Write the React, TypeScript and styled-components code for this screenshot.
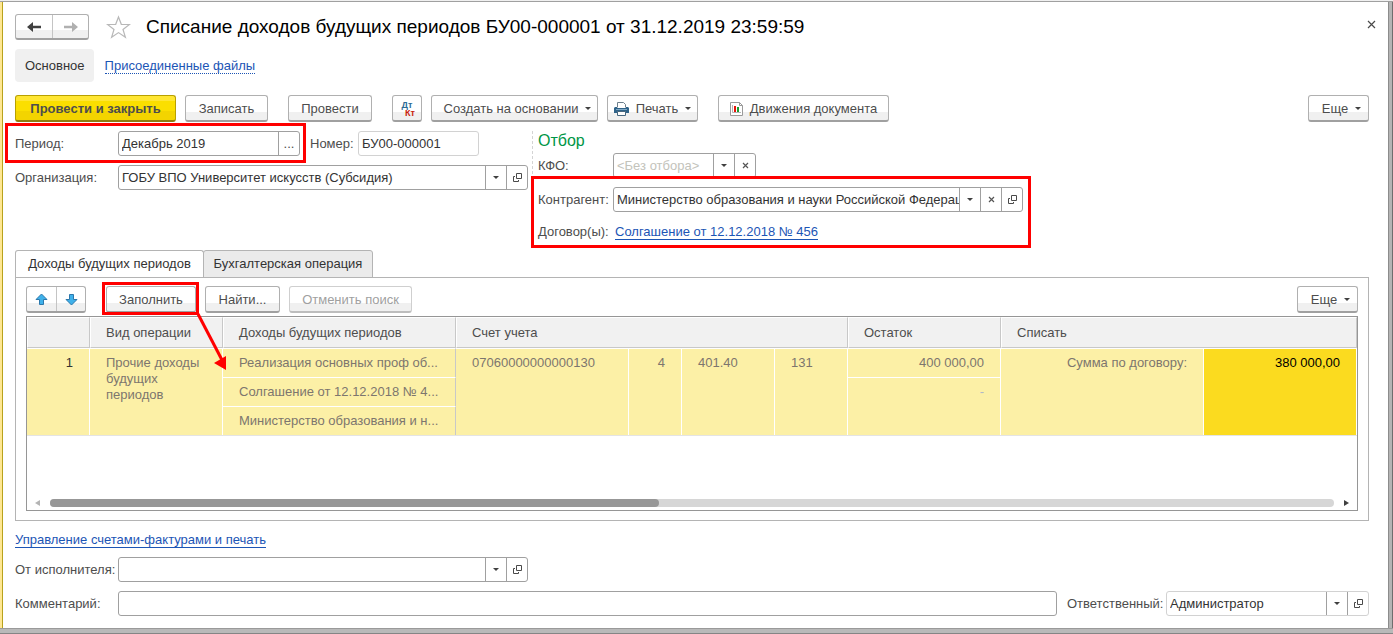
import React, { useState } from 'react';
import styled, { createGlobalStyle, css } from 'styled-components';

const GlobalStyle = createGlobalStyle`
  *, *::before, *::after { box-sizing: border-box; }
  body {
    margin: 0;
    background: #fff;
    color: #4d4d4d;
    font: 13px/16px "Liberation Sans", Arial, sans-serif;
  }
  button, input { font: inherit; color: inherit; margin: 0; }
`;

const line = '#a0a0a0';
const red = '#ff0000';

const Frame = styled.div`
  min-height: 100vh;
  display: grid;
  grid-template: 2px 1fr 6px / 3px 1fr 5px;
`;

const TopEdge = styled.div`
  grid-column: 1 / -1;
  background: #f0f0f0;
  border-bottom: 1px solid #a0a0a0;
`;

const LeftEdge = styled.div`
  background: #ffe793;
  border-right: 1px solid #b8a21c;
`;

const RightEdge = styled.div`
  background: #b4b4b4;
  border-left: 1px solid #8c8c8c;
  border-right: 1px solid #6e6e6e;
`;

const BottomEdge = styled.div`
  grid-column: 1 / -1;
  background: #b9b9b9;
  border-top: 1px solid #9a9a9a;
  border-bottom: 1px solid #858585;
`;

const Page = styled.main`
  display: flex;
  flex-direction: column;
  min-width: 0;
  padding: 12px 19px 12px 12px;
`;

const Header = styled.header`
  display: flex;
  align-items: center;
  height: 26px;
`;

const Title = styled.h1`
  flex: 1;
  margin: 0 0 0 15px;
  color: #000;
  font-size: 19px;
  line-height: 28px;
  font-weight: 400;
  white-space: nowrap;
`;

const IconButton = styled.button`
  display: flex;
  align-items: center;
  justify-content: center;
  padding: 0;
  border: 0;
  background: none;
`;

const StarButton = styled(IconButton)`
  margin-left: 17px;
`;

const CloseButton = styled(IconButton)`
  align-self: flex-start;
  width: 20px;
  height: 20px;
  margin-right: -12px;
`;

const raised = css`
  border: 1px solid #b0b0b0;
  border-bottom: 2px solid #a0a0a0;
  border-radius: 3px;
  background: linear-gradient(#fff 0 66%, #f0f0f0 66%);
`;

const ButtonPair = styled.div<{ $height: number; $half: number }>`
  display: flex;
  height: ${(p) => p.$height}px;
  ${raised}

  button {
    width: ${(p) => p.$half}px;
  }
  button + button {
    border-left: 1px solid #c4c4c4;
  }
`;

const Sections = styled.nav`
  display: flex;
  align-items: center;
  gap: 11px;
  height: 33px;
  margin-top: 9px;
`;

const SectionCurrent = styled.a`
  padding: 1px 9px 0 10px;
  border-radius: 4px;
  background: #f0f0f0;
  color: #333;
  line-height: 32px;
  text-decoration: none;
`;

const Link = styled.a<{ $dotted?: boolean }>`
  padding-top: 2px;
  color: #1c55b5;
  text-decoration: none;
  border-bottom: 1px ${(p) => (p.$dotted ? 'dotted' : 'solid')} #1c55b5;
  line-height: 14px;
`;

const Toolbar = styled.div`
  display: flex;
  align-items: center;
  height: 27px;
`;

const MainToolbar = styled(Toolbar)`
  margin-top: 13px;
`;

const Button = styled.button<{ $width: number; $gap?: number; $primary?: boolean; $menu?: boolean }>`
  display: flex;
  align-items: center;
  justify-content: center;
  gap: 7px;
  flex: none;
  width: ${(p) => p.$width}px;
  height: 27px;
  margin-left: ${(p) => p.$gap ?? 0}px;
  padding: 1px 0 0 ${(p) => (p.$menu ? 6 : 0)}px;
  white-space: nowrap;
  ${raised}

  ${(p) =>
    p.$primary &&
    css`
      border-color: #b8a000;
      border-bottom-color: #8f7d10;
      background: linear-gradient(#ffe633 0 20%, #fbdf00 20% 62%, #f3d400 62%);
      font-weight: 700;
    `}

  &:disabled {
    color: #a0a0a0;
    border-color: #cfcfcf;
    border-bottom-color: #bdbdbd;
  }
`;

const Spacer = styled.div`
  flex: 1;
`;

const Posting = styled.span`
  display: flex;
  flex-direction: column;
  width: 16px;
  font-size: 9px;
  line-height: 8px;
  font-weight: 700;
  color: #2d6a94;

  span + span {
    align-self: flex-end;
    color: #c8200c;
  }
`;

const FormArea = styled.div`
  display: flex;
  margin-top: 9px;
`;

const FormColumn = styled.div`
  display: flex;
  flex-direction: column;
  gap: 9px;
  width: 517px;
`;

const FilterColumn = styled.section`
  padding-left: 5px;
  border-left: 1px dashed #d4d4d4;
`;

const FilterTitle = styled.h2`
  margin: 0;
  color: #009646;
  font-size: 16px;
  line-height: 20px;
  font-weight: 400;
`;

const Row = styled.div`
  display: flex;
  align-items: center;
  height: 25px;
`;

const FilterRow = styled(Row)`
  margin-top: 2px;
`;

const Label = styled.label<{ $width: number }>`
  flex: none;
  width: ${(p) => p.$width}px;
  white-space: nowrap;
`;

const outline = css`
  &::after {
    content: '';
    position: absolute;
    border: 3px solid ${red};
    pointer-events: none;
  }
`;

const PeriodMark = styled(Row)`
  position: relative;
  ${outline}
  &::after { inset: -8px -6px -7px -10px; }
`;

const FilterMark = styled.div`
  position: relative;
  display: flex;
  flex-direction: column;
  gap: 7px;
  width: 485px;
  margin-top: 9px;
  ${outline}
  &::after { inset: -11px -8px -4px -7px; }
`;

const FillMark = styled.div`
  position: relative;
  margin-left: 20px;
  ${outline}
  &::after { inset: -4px -3px -2px -4px; }
`;

const Arrow = styled.svg`
  position: absolute;
  z-index: 1;
  left: 88px;
  top: 26px;
`;

const FieldBox = styled.div<{ $width?: number; $soft?: boolean }>`
  display: flex;
  flex: ${(p) => (p.$width ? 'none' : '1')};
  width: ${(p) => (p.$width ? `${p.$width}px` : 'auto')};
  min-width: 0;
  height: 25px;
  border: 1px solid ${(p) => (p.$soft ? '#d2d2d2' : line)};
  border-radius: 3px;
  background: #fff;

  input {
    flex: 1;
    min-width: 0;
    padding: 0 0 0 3px;
    border: 0;
    outline: 0;
    background: none;
    color: #333;
  }
  input::placeholder { color: #c3c3bb; opacity: 1; }

  button {
    width: 21px;
    border-left: 1px solid ${line};
  }
`;

const TabList = styled.div`
  display: flex;
  height: 28px;
  margin: 6px 0 -1px;
`;

const Tab = styled.button<{ $active: boolean; $width: number }>`
  width: ${(p) => p.$width}px;
  padding: 0;
  border: 1px solid #b4b4b4;
  border-bottom-color: ${(p) => (p.$active ? '#fff' : '#b4b4b4')};
  border-radius: 3px 3px 0 0;
  background: ${(p) => (p.$active ? '#fff' : '#ebebeb')};
  color: #333;

  & + & { margin-left: -1px; }
`;

const TabPanel = styled.div`
  padding: 8px 10px 9px;
  border: 1px solid #b4b4b4;
`;

const TableBox = styled.div`
  display: flex;
  flex-direction: column;
  justify-content: space-between;
  height: 195px;
  margin-top: 3px;
  border: 1px solid #969696;
`;

const Table = styled.table`
  width: 100%;
  table-layout: fixed;
  border-collapse: separate;
  border-spacing: 0;
  border-bottom: 1px solid #e4e4e4;
`;

const HeadCell = styled.th`
  height: 31px;
  padding: 0 15px;
  border: 1px solid #fff;
  border-right-color: #c8c8c8;
  border-bottom-color: #c8c8c8;
  background: #f1f1f1;
  background-clip: padding-box;
  font-weight: 400;
  text-align: left;
`;

const Cell = styled.td<{ $right?: boolean; $rule?: boolean; $current?: boolean; $empty?: boolean }>`
  height: 29px;
  padding: 6px 16px;
  border-right: 1px solid ${(p) => (p.$rule ? '#c8c8c8' : '#fff')};
  border-top: 1px solid #fff;
  background: ${(p) => (p.$current ? '#fbdb1f' : '#fcf0a6')};
  background-clip: padding-box;
  color: ${(p) => (p.$current ? '#000' : p.$empty ? '#b0b8c8' : '#7d766e')};
  text-align: ${(p) => (p.$right ? 'right' : 'left')};
  vertical-align: top;
  overflow: hidden;
  white-space: nowrap;
`;

const NumberCell = styled(Cell)`
  color: #333;
`;

const WrapCell = styled(Cell)`
  white-space: normal;
`;

const ScrollBar = styled.div`
  display: flex;
  align-items: center;
  gap: 10px;
  padding: 0 8px 2px;
  height: 12px;
`;

const Track = styled.div`
  flex: 1;
  height: 8px;
  border-radius: 4px;
  background: #d6d6d6;
`;

const Thumb = styled.div`
  width: 47.4%;
  height: 8px;
  border-radius: 4px;
  background: #979797;
`;

const Footer = styled.footer`
  display: flex;
  flex-direction: column;
  gap: 9px;
  margin-top: 11px;
`;

const InvoiceLine = styled.div`
  height: 16px;
`;

const Owner = styled(Row)`
  margin-left: 10px;
`;

const CaretIcon = () => (
  <svg width="6" height="3" viewBox="0 0 6 3" aria-hidden="true">
    <path d="M0 0h6L3 3z" fill="#404040" />
  </svg>
);

const ClearIcon = () => (
  <svg width="7" height="7" viewBox="0 0 7 7" aria-hidden="true">
    <path d="M1 1l5 5M6 1L1 6" stroke="#555" strokeWidth="1.200" />
  </svg>
);

const OpenIcon = () => (
  <svg width="9" height="9" viewBox="0 0 9 9" fill="none" stroke="#4a4a4a" aria-hidden="true">
    <path d="M3.500 .5h5v5h-5zM2 3.500H.5v5h5V7" />
  </svg>
);

const BackIcon = ({ color }: { color: string }) => (
  <svg width="14" height="12" viewBox="0 0 14 12" aria-hidden="true">
    <path d="M0 6l6-5v3.700h8v2.600H6V11z" fill={color} />
  </svg>
);

const ForwardIcon = ({ color }: { color: string }) => (
  <svg width="14" height="12" viewBox="0 0 14 12" aria-hidden="true">
    <path d="M14 6L8 1v3.700H0v2.600h8V11z" fill={color} />
  </svg>
);

const StarIcon = () => (
  <svg width="25" height="24" viewBox="0 0 25 24" aria-hidden="true">
    <path
      d="M12.500 2l2.800 7.300 8.200.2-6.500 4.900 2.400 7.800-6.900-4.600-6.900 4.600L8 14.400 1.500 9.500l8.200-.2z"
      fill="#fff"
      stroke="#b8b8b8"
      strokeWidth="1.200"
    />
  </svg>
);

const CloseIcon = () => (
  <svg width="9" height="9" viewBox="0 0 9 9" aria-hidden="true">
    <path d="M1 1l7 7M8 1L1 8" stroke="#4a4a4a" strokeWidth="1.200" />
  </svg>
);

const MoveIcon = ({ down }: { down?: boolean }) => (
  <svg width="13" height="13" viewBox="0 0 13 13" aria-hidden="true">
    <path
      d={down ? 'M6.500 12L1 6.500h3.500v-5h4v5H12z' : 'M6.500 1L12 6.500H8.500v5h-4v-5H1z'}
      fill="#3fb1ea"
      stroke="#2c78ac"
    />
  </svg>
);

const PrinterIcon = () => (
  <svg width="15" height="14" viewBox="0 0 15 14" aria-hidden="true">
    <path d="M3.500 5.500v-5h6l2 2v3" fill="#fff" stroke="#6d7f8c" />
    <path d="M1 5h2v1h9V5h2l1 1v5H0V6z" fill="#2f6389" />
    <path d="M2 7.500h11" stroke="#7fa9c6" />
    <path d="M3.500 9.500h8v4h-8z" fill="#fff" stroke="#48687f" />
  </svg>
);

const ReportIcon = () => (
  <svg width="13" height="14" viewBox="0 0 13 14" aria-hidden="true">
    <path d="M.5.5h9l3 3v10H.5z" fill="#fff" stroke="#9a9a9a" />
    <path d="M9.500.5v3h3" fill="none" stroke="#9a9a9a" />
    <path d="M2.500 3v7.500H11" fill="none" stroke="#b4b4b4" />
    <path d="M4 4h2v6H4z" fill="#e8140c" />
    <path d="M7 5h2v5H7z" fill="#1b9a2c" />
  </svg>
);

const ScrollArrow = ({ right }: { right?: boolean }) => (
  <svg width="5" height="6" viewBox="0 0 5 6" aria-hidden="true">
    <path d={right ? 'M0 0l5 3-5 3z' : 'M5 0L0 3l5 3z'} fill={right ? '#404040' : '#b4b4b4'} />
  </svg>
);

type Action = 'pick' | 'list' | 'clear' | 'open';

const actionNames: Record<Action, string> = {
  pick: 'Выбрать',
  list: 'Показать список',
  clear: 'Очистить',
  open: 'Открыть',
};

const actionIcons: Record<Action, React.ReactNode> = {
  pick: '...',
  list: <CaretIcon />,
  clear: <ClearIcon />,
  open: <OpenIcon />,
};

interface FieldProps {
  id: string;
  value?: string;
  placeholder?: string;
  width?: number;
  soft?: boolean;
  actions?: Action[];
}

const Field = ({ id, value = '', placeholder, width, soft, actions = [] }: FieldProps) => (
  <FieldBox $width={width} $soft={soft}>
    <input id={id} type="text" defaultValue={value} placeholder={placeholder} />
    {actions.map((a) => (
      <IconButton key={a} type="button" aria-label={actionNames[a]}>
        {actionIcons[a]}
      </IconButton>
    ))}
  </FieldBox>
);

const columnWidths = [63, 133, 233, 173, 53, 93, 73, 153, 203, 153];
const tabs = [
  { name: 'Доходы будущих периодов', width: 189 },
  { name: 'Бухгалтерская операция', width: 170 },
];

export default function App() {
  const [tab, setTab] = useState(0);

  return (
    <Frame>
      <GlobalStyle />
      <TopEdge />
      <LeftEdge />
      <Page>
        <Header>
          <ButtonPair $height={26} $half={36}>
            <IconButton type="button" aria-label="Назад"><BackIcon color="#404040" /></IconButton>
            <IconButton type="button" aria-label="Вперед"><ForwardIcon color="#b0b0b0" /></IconButton>
          </ButtonPair>
          <StarButton type="button" aria-label="В избранное"><StarIcon /></StarButton>
          <Title>Списание доходов будущих периодов БУ00-000001 от 31.12.2019 23:59:59</Title>
          <CloseButton type="button" aria-label="Закрыть"><CloseIcon /></CloseButton>
        </Header>

        <Sections>
          <SectionCurrent href="#main" aria-current="page">Основное</SectionCurrent>
          <Link href="#files" $dotted>Присоединенные файлы</Link>
        </Sections>

        <MainToolbar>
          <Button $width={161} $primary type="button">Провести и закрыть</Button>
          <Button $width={83} $gap={9} type="button">Записать</Button>
          <Button $width={84} $gap={20} type="button">Провести</Button>
          <Button $width={30} $gap={20} type="button" aria-label="Дт Кт">
            <Posting><span>Дт</span><span>Кт</span></Posting>
          </Button>
          <Button $width={167} $gap={9} $menu type="button">Создать на основании <CaretIcon /></Button>
          <Button $width={91} $gap={9} type="button"><PrinterIcon /> Печать <CaretIcon /></Button>
          <Button $width={171} $gap={20} type="button"><ReportIcon /> Движения документа</Button>
          <Spacer />
          <Button $width={61} $menu type="button">Еще <CaretIcon /></Button>
        </MainToolbar>

        <FormArea>
          <FormColumn>
            <Row>
              <PeriodMark>
                <Label $width={103} htmlFor="period">Период:</Label>
                <Field id="period" value="Декабрь 2019" width={182} actions={['pick']} />
              </PeriodMark>
              <Owner>
                <Label $width={48} htmlFor="number">Номер:</Label>
                <Field id="number" value="БУ00-000001" width={121} soft />
              </Owner>
            </Row>
            <Row>
              <Label $width={103} htmlFor="org">Организация:</Label>
              <Field id="org" value="ГОБУ ВПО Университет искусств (Субсидия)" width={410} actions={['list', 'open']} />
            </Row>
          </FormColumn>
          <FilterColumn>
            <FilterTitle>Отбор</FilterTitle>
            <FilterRow>
              <Label $width={75} htmlFor="kfo">КФО:</Label>
              <Field id="kfo" placeholder="<Без отбора>" width={143} actions={['list', 'clear']} />
            </FilterRow>
            <FilterMark>
              <Row>
                <Label $width={75} htmlFor="partner">Контрагент:</Label>
                <Field
                  id="partner"
                  value="Министерство образования и науки Российской Федерации"
                  width={410}
                  actions={['list', 'clear', 'open']}
                />
              </Row>
              <Row>
                <Label as="span" $width={77}>Договор(ы):</Label>
                <Link href="#contract">Солгашение от 12.12.2018 № 456</Link>
              </Row>
            </FilterMark>
          </FilterColumn>
        </FormArea>

        <TabList role="tablist">
          {tabs.map((t, i) => (
            <Tab
              key={t.name}
              type="button"
              role="tab"
              aria-selected={i === tab}
              $active={i === tab}
              $width={t.width}
              onClick={() => setTab(i)}
            >
              {t.name}
            </Tab>
          ))}
        </TabList>
        <TabPanel role="tabpanel">
          <Toolbar>
            <ButtonPair $height={27} $half={29}>
              <IconButton type="button" aria-label="Переместить вверх"><MoveIcon /></IconButton>
              <IconButton type="button" aria-label="Переместить вниз"><MoveIcon down /></IconButton>
            </ButtonPair>
            <FillMark>
              <Button $width={90} type="button">Заполнить</Button>
              <Arrow width="34" height="62" viewBox="0 0 34 62" aria-hidden="true">
                <path d="M4 2l24 46" stroke={red} strokeWidth="3" />
                <path d="M32 58L20 51l12-7z" fill={red} />
              </Arrow>
            </FillMark>
            <Button $width={75} $gap={9} type="button">Найти...</Button>
            <Button $width={123} $gap={9} type="button" disabled>Отменить поиск</Button>
            <Spacer />
            <Button $width={61} $menu type="button">Еще <CaretIcon /></Button>
          </Toolbar>

          <TableBox>
            <Table>
              <colgroup>
                {columnWidths.map((w, i) => <col key={i} width={w} />)}
              </colgroup>
              <thead>
                <tr>
                  <HeadCell aria-label="Номер строки" />
                  <HeadCell>Вид операции</HeadCell>
                  <HeadCell>Доходы будущих периодов</HeadCell>
                  <HeadCell colSpan={4}>Счет учета</HeadCell>
                  <HeadCell>Остаток</HeadCell>
                  <HeadCell colSpan={2}>Списать</HeadCell>
                </tr>
              </thead>
              <tbody>
                <tr>
                  <NumberCell rowSpan={3} $right>1</NumberCell>
                  <WrapCell rowSpan={3}>Прочие доходы будущих периодов</WrapCell>
                  <Cell $rule>Реализация основных проф об...</Cell>
                  <Cell rowSpan={3}>07060000000000130</Cell>
                  <Cell rowSpan={3} $right>4</Cell>
                  <Cell rowSpan={3}>401.40</Cell>
                  <Cell rowSpan={3}>131</Cell>
                  <Cell $right>400 000,00</Cell>
                  <Cell rowSpan={3} $right>Сумма по договору:</Cell>
                  <Cell rowSpan={3} $right $current>380 000,00</Cell>
                </tr>
                <tr>
                  <Cell $rule>Солгашение от 12.12.2018 № 4...</Cell>
                  <Cell rowSpan={2} $right $empty>-</Cell>
                </tr>
                <tr>
                  <Cell $rule>Министерство образования и н...</Cell>
                </tr>
              </tbody>
            </Table>
            <ScrollBar>
              <ScrollArrow />
              <Track><Thumb /></Track>
              <ScrollArrow right />
            </ScrollBar>
          </TableBox>
        </TabPanel>

        <Footer>
          <InvoiceLine>
            <Link href="#invoices">Управление счетами-фактурами и печать</Link>
          </InvoiceLine>
          <Row>
            <Label $width={103} htmlFor="executor">От исполнителя:</Label>
            <Field id="executor" width={410} actions={['list', 'open']} />
          </Row>
          <Row>
            <Label $width={103} htmlFor="comment">Комментарий:</Label>
            <Field id="comment" />
            <Owner>
              <Label $width={99} htmlFor="owner">Ответственный:</Label>
              <Field id="owner" value="Администратор" width={203} soft actions={['list', 'open']} />
            </Owner>
          </Row>
        </Footer>
      </Page>
      <RightEdge />
      <BottomEdge />
    </Frame>
  );
}
